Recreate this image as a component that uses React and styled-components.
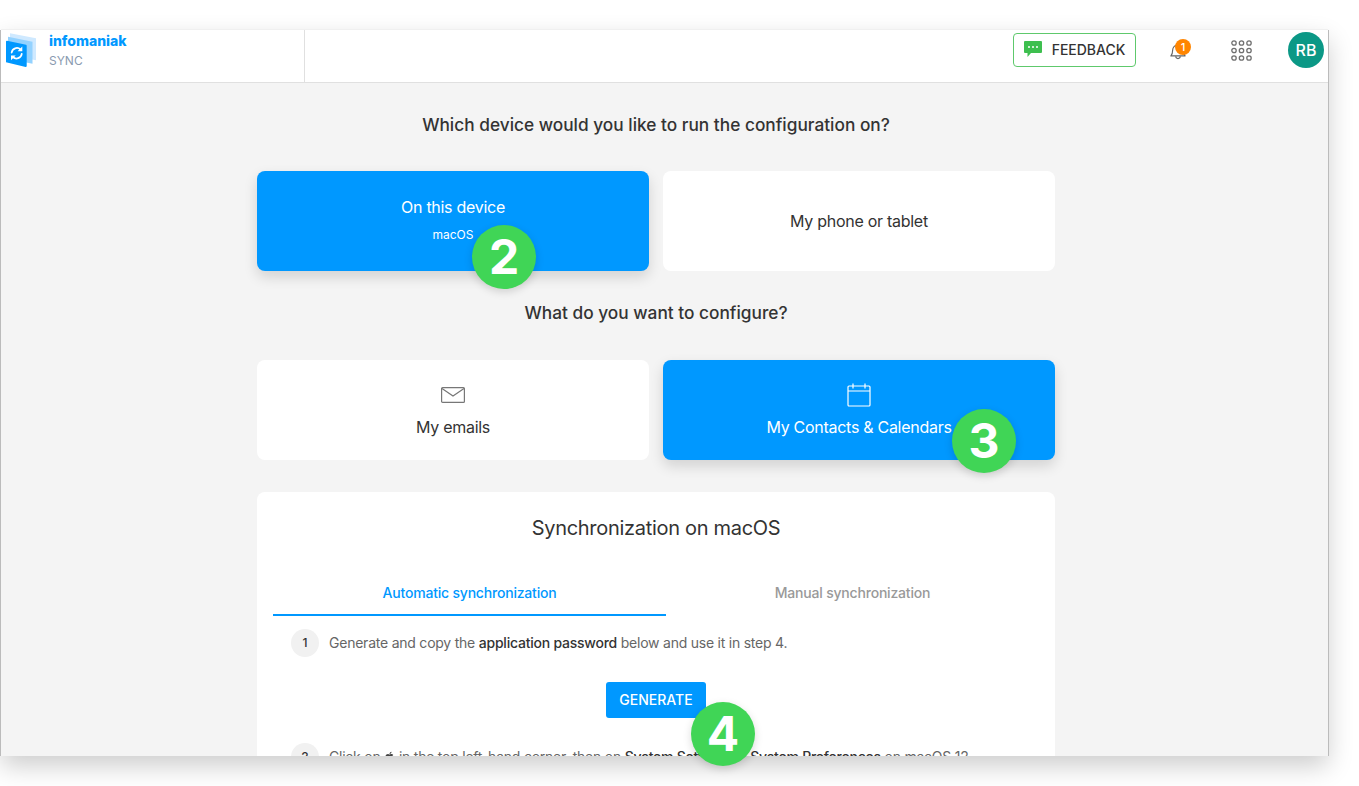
import React from 'react';
import styled, { createGlobalStyle } from 'styled-components';
import { FaApple } from 'react-icons/fa';

const GlobalStyle = createGlobalStyle`
    html, body {
        margin: 0;
        background: #fff;
        font-family: Inter, "Liberation Sans", sans-serif;
        color: #333;
    }
    * { box-sizing: border-box; }
`;

const App = () => (
    <>
        <GlobalStyle />
        <Page>
            <Frame>
                <Window>
                    <Header>
                        <Brand>
                            <LogoIcon />
                            <BrandText>
                                <BrandName>infomaniak</BrandName>
                                <BrandProduct>SYNC</BrandProduct>
                            </BrandText>
                        </Brand>
                        <HeaderActions>
                            <FeedbackButton>
                                <FeedbackIcon />
                                FEEDBACK
                            </FeedbackButton>
                            <Bell>
                                <BellIcon />
                                <BellCount>1</BellCount>
                            </Bell>
                            <GridIcon />
                            <Avatar>RB</Avatar>
                        </HeaderActions>
                    </Header>
                    <Main>
                        <Column>
                            <Question>Which device would you like to run the configuration on?</Question>
                            <CardRow>
                                <Card $active>
                                    <CardLabel>On this device</CardLabel>
                                    <CardNote>macOS</CardNote>
                                    <Callout $left={215} $top={54}>2</Callout>
                                </Card>
                                <Card>
                                    <CardLabel>My phone or tablet</CardLabel>
                                </Card>
                            </CardRow>
                            <Question>What do you want to configure?</Question>
                            <CardRow>
                                <Card>
                                    <CardIcon><MailIcon /></CardIcon>
                                    <CardLabel>My emails</CardLabel>
                                </Card>
                                <Card $active>
                                    <CardIcon><CalendarIcon /></CardIcon>
                                    <CardLabel>My Contacts &amp; Calendars</CardLabel>
                                    <Callout $left={289} $top={49}>3</Callout>
                                </Card>
                            </CardRow>
                            <Panel>
                                <PanelTitle>Synchronization on macOS</PanelTitle>
                                <Tabs>
                                    <Tab $active>Automatic synchronization</Tab>
                                    <Tab>Manual synchronization</Tab>
                                </Tabs>
                                <Step>
                                    <StepNumber>1</StepNumber>
                                    <StepText>
                                        Generate and copy the <strong>application password</strong> below and use it in step 4.
                                    </StepText>
                                </Step>
                                <GenerateButton>GENERATE</GenerateButton>
                                <Step>
                                    <StepNumber>2</StepNumber>
                                    <StepText>
                                        Click on <AppleGlyph /> in the top left-hand corner, then on <strong>System Settings</strong> or <strong>System Preferences</strong> on macOS 12
                                    </StepText>
                                </Step>
                            </Panel>
                        </Column>
                    </Main>
                </Window>
                <Callout $left={690} $top={672}>4</Callout>
            </Frame>
        </Page>
    </>
);

export default App;

const LogoIcon = () => (
    <svg width="31" height="35" viewBox="0 0 31 35">
        <path d="M4 .3l26 5v22l-26-5z" fill="#cfe9ff" />
        <path d="M2 3.800l24.500 5v22l-24.500-5z" fill="#93d2ff" />
        <path d="M1 7.700l19 4.100c.4.100.7.400.7.900v20.300c0 .6-.5 1-1 .900L1 29.600c-.6-.1-1-.6-1-1.200V8.500c0-.5.500-.9 1-.8z" fill="#0098ff" />
        <g fill="none" stroke="#fff" strokeWidth="1.800" strokeLinecap="round">
            <path d="M5.700 19.500a5.200 5.200 0 0 1 8.800-3" />
            <path d="M15.700 21a5.200 5.200 0 0 1-8.800 3" />
        </g>
        <path d="M16.300 13.500v4.700h-4.700zM5 27.200v-4.700h4.700z" fill="#fff" />
    </svg>
);

const FeedbackIcon = () => (
    <svg width="18" height="16" viewBox="0 0 18 16">
        <path d="M1 0h16a1 1 0 0 1 1 1v10a1 1 0 0 1-1 1H7l-3.500 4v-4H1a1 1 0 0 1-1-1V1a1 1 0 0 1 1-1z" fill="#3ebf4f" />
        <circle cx="5" cy="6" r="1" fill="#fff" />
        <circle cx="9" cy="6" r="1" fill="#fff" />
        <circle cx="13" cy="6" r="1" fill="#fff" />
    </svg>
);

const BellIcon = () => (
    <svg width="16" height="18" viewBox="0 0 18 20" fill="none" stroke="#666" strokeWidth="1.300">
        <path d="M1 15.500c1.500-1.500 2-3 2-6.500a6 6 0 0 1 12 0c0 3.500.5 5 2 6.500z" strokeLinejoin="round" />
        <path d="M6.500 16a2.500 2.500 0 0 0 5 0" />
    </svg>
);

const GridIcon = () => (
    <svg width="21" height="21" viewBox="0 0 21 21" fill="none" stroke="#707070" strokeWidth="1.300">
        {[3, 10.5, 18].map((cy) =>
            [3, 10.5, 18].map((cx) => <circle key={`${cx}-${cy}`} cx={cx} cy={cy} r="2.200" />)
        )}
    </svg>
);

const MailIcon = () => (
    <svg width="24" height="16" viewBox="0 0 24 16" fill="none" stroke="#777" strokeWidth="1.200">
        <rect x="0.600" y="0.600" width="22.800" height="14.800" rx="1" />
        <path d="M1 1.500l11 7.500 11-7.500" />
    </svg>
);

const CalendarIcon = () => (
    <svg width="24" height="24" viewBox="0 0 24 24" fill="none" stroke="#fff" strokeWidth="1.200">
        <rect x="1" y="3" width="22" height="20" rx="1" />
        <path d="M1 8h22M6 0.500v5M18 0.500v5" />
    </svg>
);

const AppleGlyph = () => <FaApple size={11} color="#444" />;

const Page = styled.div`
    height: 786px;
    padding: 30px 0 0 1px;
    overflow: hidden;
`;

const Frame = styled.div`
    position: relative;
    width: 1327px;
`;

const Window = styled.div`
    width: 1327px;
    height: 726px;
    overflow: hidden;
    background: #f4f4f4;
    box-shadow: -1px 0 0 #bbb, 1px 0 0 #bbb, 0 -1px 0 #f0f0f0, 0 10px 24px rgba(0, 0, 0, 0.2);
`;

const Header = styled.header`
    height: 53px;
    display: flex;
    justify-content: space-between;
    background: #fff;
    border-bottom: 1px solid #e0e0e0;
`;

const Brand = styled.div`
    width: 304px;
    display: flex;
    align-items: flex-start;
    gap: 12px;
    padding: 3px 0 0 5px;
    border-right: 1px solid #e0e0e0;
`;

const BrandText = styled.div`
    display: flex;
    flex-direction: column;
    gap: 4px;
`;

const BrandName = styled.span`
    font-size: 14px;
    line-height: 16px;
    font-weight: 800;
    color: #0098ff;
`;

const BrandProduct = styled.span`
    font-size: 12px;
    line-height: 16px;
    color: #8a9bb0;
`;

const HeaderActions = styled.div`
    display: flex;
    align-items: center;
    padding: 0 4px 12px 0;
`;

const FeedbackButton = styled.button`
    width: 123px;
    height: 34px;
    display: flex;
    align-items: center;
    justify-content: center;
    gap: 10px;
    margin-right: 34px;
    padding: 0 0 2px;
    background: #fff;
    border: 1px solid #5ec96c;
    border-radius: 4px;
    font: 500 14px Inter, "Liberation Sans", sans-serif;
    color: #333;
`;

const Bell = styled.div`
    position: relative;
    width: 16px;
    height: 18px;
    margin: 2px 45px 0 0;
`;

const BellCount = styled.span`
    position: absolute;
    top: -3px;
    left: 5px;
    width: 16px;
    height: 16px;
    border-radius: 50%;
    background: #ff8500;
    color: #fff;
    font-size: 11px;
    font-weight: 500;
    line-height: 16px;
    text-align: center;
`;

const Avatar = styled.div`
    width: 36px;
    height: 36px;
    margin-left: 36px;
    border-radius: 50%;
    background: #0b9886;
    color: #fff;
    font-size: 16px;
    font-weight: 500;
    line-height: 36px;
    text-align: center;
`;

const Main = styled.main`
    display: flex;
    justify-content: center;
    padding-right: 17px;
`;

const Column = styled.div`
    width: 798px;
    flex-shrink: 0;
`;

const Question = styled.h2`
    margin: 31px 0 36px;
    font-size: 17.3px;
    line-height: 22px;
    font-weight: 500;
    text-align: center;
    color: #333;

    &:first-child {
        margin-bottom: 35px;
    }
`;

const CardRow = styled.div`
    display: grid;
    grid-template-columns: 392px 392px;
    gap: 14px;
`;

const Card = styled.div`
    position: relative;
    height: 100px;
    display: flex;
    flex-direction: column;
    align-items: center;
    justify-content: center;
    border-radius: 8px;
    background: ${(p) => (p.$active ? '#0098ff' : '#fff')};
    color: ${(p) => (p.$active ? '#fff' : '#333')};
    box-shadow: ${(p) => (p.$active ? '0 6px 14px rgba(0, 0, 0, 0.14)' : 'none')};
`;

const CardIcon = styled.div`
    height: 24px;
    display: flex;
    align-items: center;
    margin-bottom: 9px;
`;

const CardLabel = styled.div`
    font-size: 16px;
    line-height: 22px;
    letter-spacing: -0.28px;
`;

const CardNote = styled.div`
    font-size: 12px;
    line-height: 16px;
    margin: 9px 0 3px;
`;

const Callout = styled.div`
    position: absolute;
    left: ${(p) => p.$left}px;
    top: ${(p) => p.$top}px;
    width: 64px;
    height: 64px;
    border-radius: 50%;
    background: #40d556;
    color: #fff;
    font-size: 48px;
    font-weight: 700;
    line-height: 64px;
    text-align: center;
    box-shadow: 0 3px 8px rgba(0, 0, 0, 0.15);
`;

const Panel = styled.section`
    height: 300px;
    margin-top: 32px;
    padding: 23px 16px 0;
    background: #fff;
    border-radius: 8px 8px 0 0;
`;

const PanelTitle = styled.h3`
    margin: 0 0 33px;
    font-size: 20px;
    line-height: 26px;
    font-weight: 400;
    letter-spacing: -0.3px;
    text-align: center;
    color: #333;
`;

const Tabs = styled.div`
    display: grid;
    grid-template-columns: 393px 373px;
`;

const Tab = styled.div`
    height: 42px;
    padding-top: 9px;
    font-size: 14px;
    font-weight: 500;
    line-height: 20px;
    letter-spacing: -0.2px;
    text-align: center;
    color: ${(p) => (p.$active ? '#0098ff' : '#999')};
    border-bottom: ${(p) => (p.$active ? '2px solid #0098ff' : 'none')};
`;

const Step = styled.div`
    display: flex;
    align-items: center;
    gap: 10px;
    padding: 13px 0 0 18px;
`;

const StepNumber = styled.span`
    width: 28px;
    height: 28px;
    flex-shrink: 0;
    border-radius: 50%;
    background: #f1f1f1;
    font-size: 12px;
    font-weight: 500;
    line-height: 28px;
    text-align: center;
    color: #333;
`;

const StepText = styled.p`
    margin: 0;
    font-size: 14px;
    line-height: 20px;
    letter-spacing: -0.23px;
    color: #666;
    white-space: nowrap;

    strong {
        font-weight: 500;
        color: #333;
    }
`;

const GenerateButton = styled.button`
    display: block;
    width: 100px;
    height: 36px;
    margin: 25px auto 12px;
    padding: 0 0 2px;
    border: none;
    border-radius: 3px;
    background: #0098ff;
    color: #fff;
    font: 500 14px Inter, "Liberation Sans", sans-serif;
`;
